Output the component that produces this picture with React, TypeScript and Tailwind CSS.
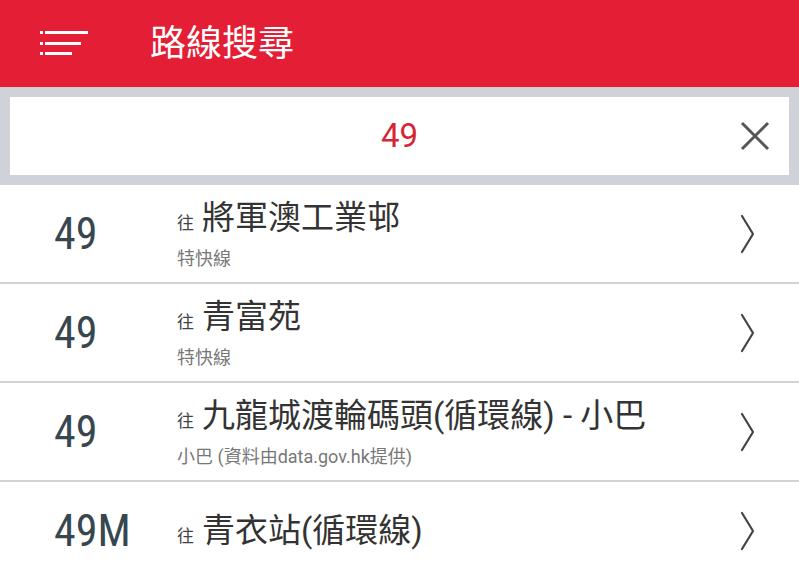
type Route = {
  number: string;
  dest: string;
  sub?: string;
};

const ROUTES: Route[] = [
  { number: "49", dest: "將軍澳工業邨", sub: "特快線" },
  { number: "49", dest: "青富苑", sub: "特快線" },
  { number: "49", dest: "九龍城渡輪碼頭(循環線) - 小巴", sub: "小巴 (資料由data.gov.hk提供)" },
  { number: "49M", dest: "青衣站(循環線)" },
];

const CJK = "font-['Roboto','Noto_Sans_CJK_TC',sans-serif]";

const MenuIcon = () => (
  <svg width="50" height="30" viewBox="0 0 50 30" className="shrink-0">
    <g fill="#fff">
      <rect x="0" y="2" width="3" height="3" />
      <rect x="5" y="2" width="43" height="3" />
      <rect x="0" y="13" width="3" height="3" />
      <rect x="5" y="13" width="36" height="3" />
      <rect x="0" y="23" width="3" height="3" />
      <rect x="5" y="23" width="27" height="3" />
    </g>
  </svg>
);

const Chevron = () => (
  <svg width="16" height="40" viewBox="0 0 16 40" className="mr-[43px] shrink-0">
    <path d="M2 2 L13 20 L2 38" fill="none" stroke="#444" strokeWidth="2.2" strokeLinecap="round" strokeLinejoin="round" />
  </svg>
);

const ClearIcon = () => (
  <svg width="30" height="30" viewBox="0 0 30 30" className="absolute right-[19px]">
    <path d="M2 2 L28 28 M28 2 L2 28" stroke="#555" strokeWidth="3" strokeLinecap="butt" />
  </svg>
);

const RouteRow = ({ route }: { route: Route }) => (
  <div className="flex h-[99px] items-center border-b-2 border-[#d2d2d2] bg-white">
    <div className="w-[177px] shrink-0 pl-[54px] font-['Roboto_Condensed','Liberation_Sans_Narrow','Roboto',sans-serif] text-[44px] leading-none text-[#37474f] [font-stretch:condensed]">
      {route.number}
    </div>

    <div className={`flex min-w-0 flex-1 flex-col ${route.sub ? "self-start pt-[14px]" : ""}`}>
      <div className={`flex items-baseline ${CJK}`}>
        <span className="mr-[8px] text-[17px] text-[#444]">往</span>
        <span className="text-[33px] leading-[38px] text-[#333]">{route.dest}</span>
      </div>
      {route.sub && (
        <p className={`mt-[11px] text-[18px] leading-[22px] text-[#777] ${CJK}`}>{route.sub}</p>
      )}
    </div>

    <Chevron />
  </div>
);

export default function App() {
  return (
    <div className="h-[574px] w-[799px] overflow-hidden bg-white">
      {/* App bar */}
      <div className="flex h-[87px] items-center bg-[#e41e34] pl-[40px]">
        <MenuIcon />
        <h1 className={`ml-[60px] text-[36px] leading-none text-white ${CJK}`}>路線搜尋</h1>
      </div>

      {/* Search box */}
      <div className="bg-[#cfd3d9] px-[10px] py-[10px]">
        <div className="relative flex h-[78px] items-center justify-center bg-white">
          <span className="font-['Roboto',sans-serif] text-[33px] text-[#d62535]">49</span>
          <ClearIcon />
        </div>
      </div>

      {/* Results */}
      <div>
        {ROUTES.map((r, i) => (
          <RouteRow key={i} route={r} />
        ))}
      </div>
    </div>
  );
}
